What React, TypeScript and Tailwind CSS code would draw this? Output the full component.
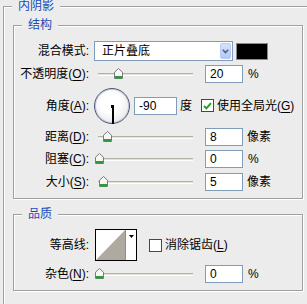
import type { ReactNode } from "react";

function Mn({ children }: { children: ReactNode }) {
  return <span className="underline underline-offset-2">{children}</span>;
}

function Thumb() {
  return (
    <svg width="9" height="11" viewBox="0 0 9 11">
      <path d="M0.5 10.5 V4.2 L4.5 0.5 L8.5 4.2 V10.5 Z" fill="#f7f7f5" stroke="#7a7a7a" />
      <rect x="1" y="8" width="7" height="2.5" fill="#2f9a3c" />
    </svg>
  );
}

function Slider({ thumb }: { thumb: string }) {
  return (
    <div className="relative w-[107px] h-[20px] shrink-0">
      <div className="absolute left-[4px] right-[8px] top-[9px] h-[3px] bg-[#e4e1d8] border-t border-[#b3b0a6] border-b border-b-white" />
      <div className={`absolute top-[4px] ${thumb}`}>
        <Thumb />
      </div>
    </div>
  );
}

function Field({ value, w = "w-[38px]" }: { value: string; w?: string }) {
  return (
    <div className={`${w} h-[18px] shrink-0 bg-white border border-[#7f9db9] pl-[4px] text-[12px] leading-[16px]`}>
      {value}
    </div>
  );
}

function Label({ children }: { children: ReactNode }) {
  return <div className="w-[76px] shrink-0 text-right pr-[1px] whitespace-nowrap">{children}</div>;
}

function Legend({ children }: { children: ReactNode }) {
  return (
    <span className="absolute -top-[8px] left-[8px] px-[6px] bg-[#ececec] text-[#1a4bb8] text-[12px] leading-[14px]">
      {children}
    </span>
  );
}

export default function App() {
  return (
    <div className="w-[307px] h-[304px] overflow-hidden bg-[#ececec] text-black text-[12px] leading-[14px] font-['Liberation_Sans','Noto_Sans_CJK_SC',sans-serif] pt-[6px] pl-[3px]">
      <div className="relative w-[400px] h-[400px] border-l border-t border-[#a0a0a0] shadow-[inset_1px_1px_0_#fff] pl-[9px] pt-[18px]">
        <Legend>内阴影</Legend>

        {/* 结构 */}
        <div className="relative w-[290px] border border-[#a0a0a0] shadow-[inset_1px_1px_0_#fff,1px_1px_0_#fff] pt-[15px] pb-[6px]">
          <Legend>结构</Legend>

          <div className="flex items-center h-[20px]">
            <Label>混合模式:</Label>
            <div className="ml-[4px] w-[139px] h-[20px] bg-white border border-[#7f9db9] flex items-center justify-between pl-[7px] pr-[1px]">
              <span>正片叠底</span>
              <div className="w-[11px] h-[16px] rounded-[2px] bg-gradient-to-b from-[#d6e2fc] to-[#b4c8f6] border border-[#b9cbf5] flex items-center justify-center">
                <svg width="7" height="5" viewBox="0 0 7 5">
                  <path d="M0.8 0.8 L3.5 3.6 L6.2 0.8" fill="none" stroke="#4d6185" strokeWidth="1.6" />
                </svg>
              </div>
            </div>
            <div className="ml-[3px] w-[32px] h-[17px] bg-black border border-[#8a8a8a]" />
          </div>

          <div className="flex items-center h-[20px] mt-[3px]">
            <Label>
              不透明度(<Mn>O</Mn>):
            </Label>
            <div className="ml-[4px]">
              <Slider thumb="left-[20px]" />
            </div>
            <div className="ml-[4px]">
              <Field value="20" />
            </div>
            <span className="ml-[5px]">%</span>
          </div>

          <div className="flex items-center h-[37px] mt-[3px]">
            <Label>
              角度(<Mn>A</Mn>):
            </Label>
            <div className="ml-[4px] w-[36px] h-[36px] rounded-full border border-[#4a5676] bg-[radial-gradient(circle_at_45%_40%,#ffffff_35%,#dcdcdc_100%)] shadow-[inset_0_0_0_1px_#c9ced9] relative shrink-0">
              <div className="absolute left-[16px] top-[16px] w-[3px] h-[3px] bg-black" />
              <div className="absolute left-[17px] top-[17px] w-[1.5px] h-[18px] bg-black" />
            </div>
            <div className="ml-[4px]">
              <Field value="-90" w="w-[43px]" />
            </div>
            <span className="ml-[3px]">度</span>
            <div className="ml-[9px] w-[13px] h-[13px] bg-white border border-[#1c5180] flex items-center justify-center">
              <svg width="9" height="8" viewBox="0 0 9 8">
                <path d="M1 4 L3.4 6.4 L8 1.2" fill="none" stroke="#21a121" strokeWidth="2" />
              </svg>
            </div>
            <span className="ml-[3px] whitespace-nowrap">
              使用全局光(<Mn>G</Mn>)
            </span>
          </div>

          <div className="flex items-center h-[20px] mt-[3px]">
            <Label>
              距离(<Mn>D</Mn>):
            </Label>
            <div className="ml-[4px]">
              <Slider thumb="left-[9px]" />
            </div>
            <div className="ml-[4px]">
              <Field value="8" />
            </div>
            <span className="ml-[4px]">像素</span>
          </div>

          <div className="flex items-center h-[20px] mt-[2px]">
            <Label>
              阻塞(<Mn>C</Mn>):
            </Label>
            <div className="ml-[4px]">
              <Slider thumb="left-[1px]" />
            </div>
            <div className="ml-[4px]">
              <Field value="0" />
            </div>
            <span className="ml-[5px]">%</span>
          </div>

          <div className="flex items-center h-[20px] mt-[3px]">
            <Label>
              大小(<Mn>S</Mn>):
            </Label>
            <div className="ml-[4px]">
              <Slider thumb="left-[5px]" />
            </div>
            <div className="ml-[4px]">
              <Field value="5" />
            </div>
            <span className="ml-[4px]">像素</span>
          </div>
        </div>

        {/* 品质 */}
        <div className="relative w-[290px] h-[77px] mt-[15px] border border-[#a0a0a0] shadow-[inset_1px_1px_0_#fff,1px_1px_0_#fff] pt-[14px]">
          <Legend>品质</Legend>

          <div className="flex items-center h-[32px]">
            <Label>等高线:</Label>
            <div className="ml-[5px] w-[42px] h-[32px] border border-black bg-white flex shrink-0">
              <svg width="29" height="30" viewBox="0 0 29 30" className="shrink-0">
                <path d="M0 30 L29 0 V30 Z" fill="#aeaa9f" />
              </svg>
              <div className="w-px h-full bg-[#8d8d8d]" />
              <div className="flex-1 flex justify-center pt-[5px]">
                <svg width="5" height="3" viewBox="0 0 5 3">
                  <path d="M0 0 H5 L2.5 3 Z" fill="#000" />
                </svg>
              </div>
            </div>
            <div className="ml-[12px] w-[13px] h-[13px] bg-white border border-[#1c5180]" />
            <span className="ml-[3px] whitespace-nowrap">
              消除锯齿(<Mn>L</Mn>)
            </span>
          </div>

          <div className="flex items-center h-[20px] mt-[3px]">
            <Label>
              杂色(<Mn>N</Mn>):
            </Label>
            <div className="ml-[4px]">
              <Slider thumb="left-[1px]" />
            </div>
            <div className="ml-[4px]">
              <Field value="0" />
            </div>
            <span className="ml-[5px]">%</span>
          </div>
        </div>
      </div>
    </div>
  );
}
